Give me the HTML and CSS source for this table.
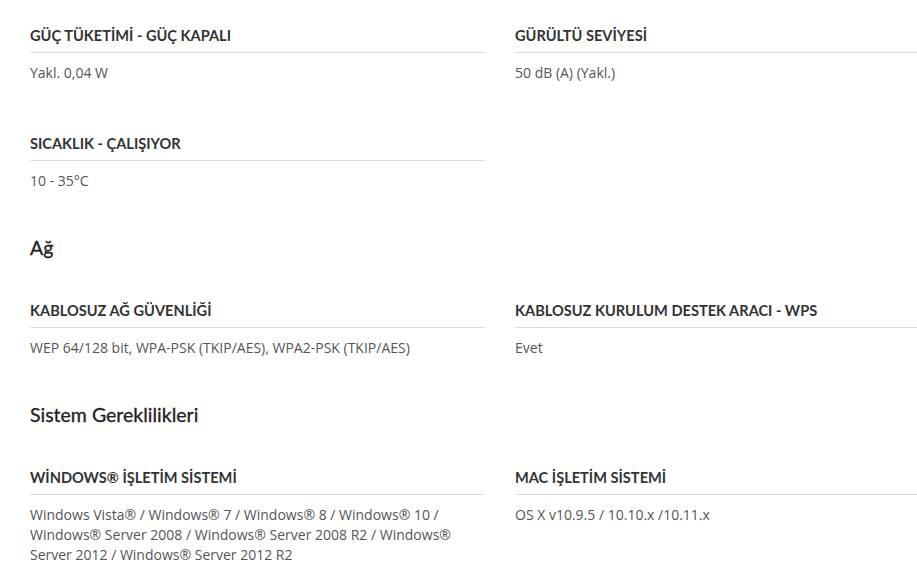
FILE: index.html
```html
<!DOCTYPE html>
<html lang="tr">
<head>
<meta charset="utf-8">
<link rel="stylesheet" href="styles.css">
</head>
<body>
<div class="specs">
  <div class="grid">
    <div class="item">
      <h4 class="label">GÜÇ TÜKETİMİ - GÜÇ KAPALI</h4>
      <p class="value">Yakl. 0,04 W</p>
    </div>
    <div class="item">
      <h4 class="label">GÜRÜLTÜ SEVİYESİ</h4>
      <p class="value">50 dB (A) (Yakl.)</p>
    </div>
    <div class="item">
      <h4 class="label">SICAKLIK - ÇALIŞIYOR</h4>
      <p class="value">10 - 35°C</p>
    </div>
  </div>

  <h3 class="section">Ağ</h3>
  <div class="grid">
    <div class="item">
      <h4 class="label">KABLOSUZ AĞ GÜVENLİĞİ</h4>
      <p class="value">WEP 64/128 bit, WPA-PSK (TKIP/AES), WPA2-PSK (TKIP/AES)</p>
    </div>
    <div class="item">
      <h4 class="label">KABLOSUZ KURULUM DESTEK ARACI - WPS</h4>
      <p class="value">Evet</p>
    </div>
  </div>

  <h3 class="section">Sistem Gereklilikleri</h3>
  <div class="grid">
    <div class="item">
      <h4 class="label">WİNDOWS® İŞLETİM SİSTEMİ</h4>
      <p class="value">Windows Vista® / Windows® 7 / Windows® 8 / Windows® 10 / Windows® Server 2008 / Windows® Server 2008 R2 / Windows® Server 2012 / Windows® Server 2012 R2</p>
    </div>
    <div class="item">
      <h4 class="label">MAC İŞLETİM SİSTEMİ</h4>
      <p class="value">OS X v10.9.5 / 10.10.x /10.11.x</p>
    </div>
  </div>
</div>
</body>
</html>
```
FILE: styles.css
```css
html, body {
  margin: 0;
  padding: 0;
  background: #fff;
}
.specs {
  padding: 25px 0 0 30px;
}
.grid {
  display: grid;
  grid-template-columns: 455px 1fr;
  column-gap: 30px;
  row-gap: 50px;
}
.item {
  min-width: 0;
}
.label {
  margin: 0;
  padding: 1px 0 6px;
  border-bottom: 1px solid #dcdcdc;
  font-family: "Lato", sans-serif;
  font-weight: 700;
  font-size: 14.6px;
  line-height: 20px;
  color: #333;
}
.value {
  margin: 10px 0 0;
  font-family: "Open Sans", sans-serif;
  font-size: 14px;
  line-height: 20px;
  color: #555;
}
.section {
  margin: 45px 0 40px;
  font-family: "Lato", sans-serif;
  font-weight: 400;
  font-size: 19.5px;
  line-height: 24px;
  color: #222;
  -webkit-text-stroke: 0.3px #222;
}
```
